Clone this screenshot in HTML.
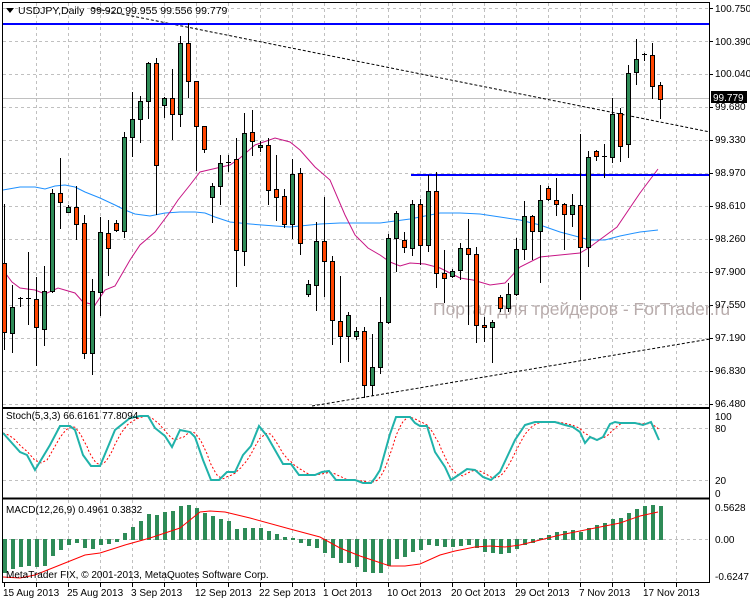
<!DOCTYPE html>
<html><head><meta charset="utf-8">
<style>
html,body{margin:0;padding:0;background:#fff;}
svg{display:block;font-family:"Liberation Sans","DejaVu Sans",sans-serif;font-size:10px;}
</style></head>
<body>
<svg id="s" width="750" height="600" xmlns="http://www.w3.org/2000/svg">
<rect width="750" height="600" fill="#fff"/>
<g id="grid"></g>
<g id="ind"></g>
<text x="433" y="315" fill="#b8acac" font-size="17.5px">Портал для трейдеров - ForTrader.ru</text>
<g id="cnd"></g>
<!-- frames -->
<rect x="2.5" y="2.5" width="707" height="580" fill="none" stroke="#000"/>
<line x1="2" y1="408" x2="710" y2="408" stroke="#000" stroke-width="2"/>
<line x1="2" y1="498.5" x2="710" y2="498.5" stroke="#000" stroke-width="2"/>
<!-- price axis labels -->
<g fill="#000">
<text x="715" y="12">100.750</text>
<text x="715" y="45">100.390</text>
<text x="715" y="77">100.040</text>
<text x="715" y="110">99.680</text>
<text x="715" y="143">99.330</text>
<text x="715" y="176">98.970</text>
<text x="715" y="209">98.610</text>
<text x="715" y="242">98.260</text>
<text x="715" y="275">97.900</text>
<text x="715" y="308">97.550</text>
<text x="715" y="341">97.190</text>
<text x="715" y="374">96.830</text>
<text x="715" y="407">96.480</text>
<text x="715" y="420">100</text>
<text x="715" y="432">80</text>
<text x="715" y="484">20</text>
<text x="715" y="497">0</text>
<text x="715" y="511">0.5628</text>
<text x="715" y="543">0.00</text>
<text x="715" y="580">-0.6247</text>
</g>
<rect x="711" y="91" width="36" height="12" fill="#000"/>
<text x="713" y="101" fill="#fff">99.779</text>
<!-- date labels -->
<g fill="#000">
<text x="3" y="596">15 Aug 2013</text>
<text x="67" y="596">25 Aug 2013</text>
<text x="131" y="596">3 Sep 2013</text>
<text x="195" y="596">12 Sep 2013</text>
<text x="259" y="596">22 Sep 2013</text>
<text x="323" y="596">1 Oct 2013</text>
<text x="387" y="596">10 Oct 2013</text>
<text x="451" y="596">20 Oct 2013</text>
<text x="515" y="596">29 Oct 2013</text>
<text x="579" y="596">7 Nov 2013</text>
<text x="643" y="596">17 Nov 2013</text>
</g>
<polygon points="6,8 14,8 10,13" fill="#000"/>
<text x="18" y="14" fill="#000" font-size="10.5px">USDJPY,Daily&#160; 99.920 99.955 99.556 99.779</text>
<text x="6" y="419" fill="#000">Stoch(5,3,3) 66.6161 77.8094</text>
<text x="6" y="513" fill="#000">MACD(12,26,9) 0.4961 0.3832</text>
<text x="6" y="578" fill="#000">MetaTrader FIX, © 2001-2013, MetaQuotes Software Corp.</text>
</svg>
<script>
var NS="http://www.w3.org/2000/svg";
function el(p,t,a){var e=document.createElementNS(NS,t);for(var k in a)e.setAttribute(k,a[k]);p.appendChild(e);return e;}
var g=document.getElementById('grid'),ind=document.getElementById('ind'),cg=document.getElementById('cnd');
var ds={stroke:"#c0c0c0","stroke-dasharray":"3,3","stroke-width":1};
for(var x=36;x<=700;x+=32){
 [[3,407],[410,497],[500,582]].forEach(function(r){var a=Object.assign({x1:x+.5,x2:x+.5,y1:r[0],y2:r[1]},ds);el(g,'line',a);});
 el(g,'line',{x1:x+.5,x2:x+.5,y1:583,y2:587,stroke:"#000"});
}
el(g,'line',{x1:4.5,x2:4.5,y1:583,y2:587,stroke:"#000"});
for(var k=0;k<13;k++){var y=8.5+33*k;el(g,'line',Object.assign({x1:3,x2:709,y1:y,y2:y},ds));el(g,'line',{x1:709,x2:713,y1:y,y2:y,stroke:"#000"});}
[428.5,480.5].forEach(function(y){el(g,'line',Object.assign({x1:3,x2:709,y1:y,y2:y},ds));});
el(g,'line',Object.assign({x1:3,x2:709,y1:539.5,y2:539.5},ds));
el(g,'line',{x1:3,x2:709,y1:98.5,y2:98.5,stroke:"#c0c0c0"});
function pl(pts,a){a.points=pts.map(function(p){return p.join(',');}).join(' ');a.fill='none';el(ind,'polyline',a);}
pl([[3,190],[20,187],[35,187],[45,189],[55,186],[65,185],[75,187],[85,192],[100,198],[115,205],[125,210],[135,214],[150,216],[165,213],[180,212],[195,212],[205,213],[215,217],[230,222],[250,224],[275,226],[290,227],[300,226],[320,224],[340,223],[365,223],[380,223],[395,221],[410,219],[420,217],[440,213],[460,213],[480,214],[500,217],[520,220],[540,225],[560,232],[575,236],[590,240],[605,240],[620,236],[640,232],[658,230]],{stroke:"#1e90ff","stroke-width":1});
pl([[3,270],[12,282],[20,288],[35,290],[45,294],[58,288],[75,293],[83,302],[95,305],[105,290],[115,286],[130,260],[140,245],[155,232],[170,212],[178,200],[190,185],[200,172],[217,168],[230,165],[240,158],[255,145],[275,138],[290,142],[300,150],[315,167],[330,180],[345,215],[355,235],[368,248],[380,255],[390,262],[400,266],[410,263],[425,264],[440,268],[460,278],[473,280],[490,285],[505,283],[520,267],[540,257],[580,253],[590,247],[617,227],[640,193],[658,169]],{stroke:"#c71585","stroke-width":1});
el(ind,'line',{x1:92,y1:8,x2:710,y2:132,stroke:"#000","stroke-dasharray":"3,2"});
el(ind,'line',{x1:312,y1:406,x2:710,y2:339,stroke:"#000","stroke-dasharray":"3,2"});
el(ind,'line',{x1:3,y1:24,x2:709,y2:24,stroke:"#0000ff","stroke-width":2});
el(ind,'line',{x1:411,y1:175,x2:709,y2:175,stroke:"#0000ff","stroke-width":2});
var C=[[263,332,204,350,'r'],[307,333,285,353,'g'],[298,298,297,307,'d'],[298,298,252,325,'d'],[299,327,277,366,'r'],[291,329,266,346,'g'],[193,291,189,293,'g'],[193,202,158,229,'r'],[207,212,205,213,'g'],[207,224,186,240,'r'],[223,353,215,359,'r'],[291,353,279,375,'g'],[232,292,217,316,'g'],[233,248,220,276,'r'],[223,230,220,232,'r'],[137,231,132,238,'g'],[119,137,92,157,'g'],[101,119,96,143,'g'],[63,101,62,119,'g'],[63,165,58,215,'r'],[98,105,97,118,'g'],[98,114,69,140,'r'],[43,114,36,127,'g'],[43,81,23,98,'r'],[81,126,81,171,'r'],[126,149,126,153,'r'],[186,197,183,223,'g'],[163,186,155,205,'g'],[162,162,155,172,'d'],[159,250,138,287,'r'],[133,251,113,266,'g'],[132,141,110,156,'r'],[145,147,141,152,'g'],[145,190,138,205,'r'],[189,197,155,221,'r'],[196,224,189,228,'r'],[174,224,159,239,'g'],[173,243,168,255,'r'],[284,294,280,297,'g'],[241,285,222,311,'g'],[241,261,197,297,'r'],[261,320,256,345,'r'],[321,336,276,363,'r'],[315,336,312,362,'g'],[331,336,327,340,'g'],[331,385,327,398,'r'],[367,385,334,396,'g'],[322,367,297,374,'g'],[238,322,234,324,'g'],[213,238,211,272,'g'],[240,247,232,253,'r'],[204,248,200,256,'g'],[204,245,199,265,'r'],[191,245,175,252,'g'],[191,273,172,288,'r'],[273,278,250,303,'r'],[271,276,269,278,'g'],[248,270,243,280,'g'],[248,254,219,325,'r'],[254,325,247,343,'r'],[325,327,317,342,'r'],[322,327,320,363,'g'],[297,308,295,312,'r'],[294,308,283,312,'g'],[249,294,238,296,'g'],[216,249,201,260,'g'],[216,231,215,260,'r'],[200,231,185,283,'g'],[188,199,186,201,'r'],[200,204,178,216,'r'],[204,214,203,250,'r'],[205,214,194,227,'g'],[205,247,134,300,'r'],[157,247,151,267,'g'],[151,156,150,161,'r'],[156,156,144,178,'d'],[114,157,98,163,'g'],[113,146,108,162,'r'],[73,144,65,158,'g'],[59,72,39,85,'g'],[54,54,53,61,'d'],[55,86,43,99,'r'],[85,99,82,119,'r']];
C.forEach(function(c,i){var x=4+8*i;
 el(cg,'line',{x1:x+.5,x2:x+.5,y1:c[2],y2:c[3],stroke:"#000"});
 if(c[4]=='d'){el(cg,'line',{x1:x-2,x2:x+3,y1:c[0]+.5,y2:c[0]+.5,stroke:"#000"});}
 else el(cg,'rect',{x:x-2+.5,y:c[0]+.5,width:4,height:Math.max(c[1]-c[0],2),fill:c[4]=='g'?"#2e8b57":"#ff4500",stroke:"#000"});
});
var S=[[3,433],[20,452],[27,455],[35,470],[50,445],[60,426],[70,426],[75,430],[83,455],[91,466],[100,466],[115,430],[130,418],[140,416],[148,416],[155,428],[165,436],[172,447],[180,430],[190,432],[195,437],[203,460],[211,480],[219,480],[227,472],[235,472],[243,455],[251,446],[259,426],[267,436],[275,450],[283,464],[291,464],[299,475],[315,475],[322,472],[329,471],[336,480],[345,480],[355,480],[363,483],[371,483],[375,478],[380,470],[390,434],[396,417],[410,417],[415,423],[420,426],[427,426],[435,452],[445,467],[451,480],[460,474],[467,469],[475,470],[483,477],[491,480],[500,472],[515,440],[525,425],[535,422],[545,422],[555,422],[565,425],[573,427],[580,432],[585,443],[590,437],[597,440],[603,437],[610,424],[615,422],[620,423],[635,423],[643,425],[651,422],[659,440]];
function at(x){for(var i=1;i<S.length;i++){if(S[i][0]>=x){var a=S[i-1],b=S[i];return a[1]+(b[1]-a[1])*(x-a[0])/(b[0]-a[0]);}}return S[S.length-1][1];}
var sig=[];for(var x=3;x<=659;x+=2){var v=(at(x)+at(Math.max(3,x-6))+at(Math.max(3,x-12)))/3;sig.push([x,v.toFixed(1)]);}
pl(sig,{stroke:"#ff0000","stroke-dasharray":"2,2","stroke-width":1});
pl(S,{stroke:"#20b2aa","stroke-width":2});
var M=[573,569,567,566,567,566,556,550,545,543,548,549,545,544,542,533,527,521,514,515,512,511,506,505,508,513,516,519,521,529,528,528,528,531,534,537,538,543,546,548,553,558,563,563,567,572,573,573,566,559,557,552,550,545,546,547,547,546,545,548,552,553,554,553,549,545,543,538,535,532,531,530,532,528,525,523,519,518,513,509,506,505,506];
M.forEach(function(v,i){var x=4+8*i;var t=Math.min(v,539),b=Math.max(v,540);el(ind,'rect',{x:x-1,y:t,width:4,height:Math.max(b-t,1),fill:"#2e8b57"});});
pl([[3,577],[20,578],[35,575],[60,565],[85,555],[100,553],[125,545],[150,538],[180,528],[200,512],[210,511],[225,512],[250,518],[290,529],[320,537],[340,548],[360,556],[375,561],[390,566],[405,566],[420,564],[440,555],[455,551],[475,547],[490,546],[505,547],[520,545],[540,540],[560,535],[580,531],[600,527],[620,523],[640,516],[658,512]],{stroke:"#ff0000","stroke-width":1});
</script>
</body></html>
